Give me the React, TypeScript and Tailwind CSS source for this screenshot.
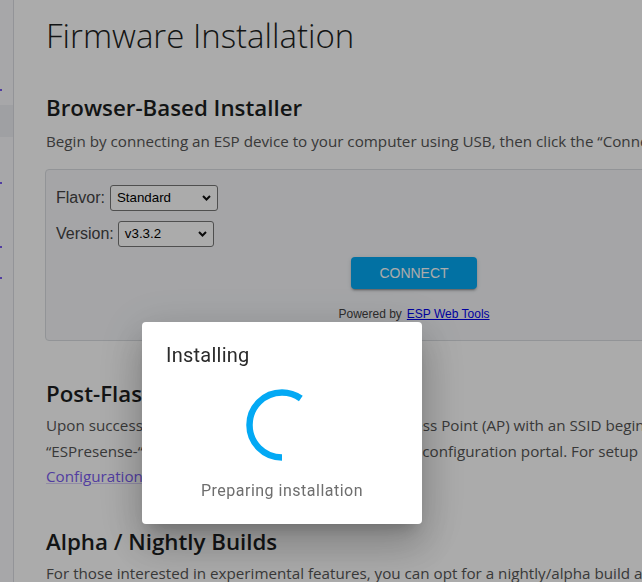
import React from 'react';

const docFont = { fontFamily: '"Open Sans", "Noto Sans", sans-serif' };

const Chevron: React.FC = () => (
  <svg width="9" height="6" viewBox="0 0 9 6" className="shrink-0">
    <path d="M1 1l3.5 3.5L8 1" fill="none" stroke="#111" strokeWidth="2" />
  </svg>
);

interface FakeSelectProps {
  value: string;
  className: string;
}

const FakeSelect: React.FC<FakeSelectProps> = ({ value, className }) => (
  <span
    className={`inline-flex h-[26px] items-center justify-between rounded-[3px] border border-[#767676] bg-white px-[6px] text-[13.33px] text-black ${className}`}
  >
    <span>{value}</span>
    <Chevron />
  </span>
);

const Sidebar: React.FC = () => (
  <aside className="w-[14px] shrink-0 border-r border-[#dcdde3] bg-[#fafafc]">
    <div className="h-[89px]" />
    <div className="h-[2px] w-[2px] bg-[#7a5cf0]" />
    <div className="h-[14px]" />
    <div className="h-[32px] bg-[#eeeff3]" />
    <div className="h-[45px]" />
    <div className="h-[2px] w-[2px] bg-[#7a5cf0]" />
    <div className="h-[62px]" />
    <div className="h-[2px] w-[2px] bg-[#7a5cf0]" />
    <div className="h-[29px]" />
    <div className="h-[2px] w-[2px] bg-[#7a5cf0]" />
  </aside>
);

const Installer: React.FC = () => (
  <div
    className="-ml-[1px] mt-[14.5px] w-[738px] rounded-[4px] border border-[#dadde1] bg-[#f6f7fa] px-[10px] pt-[15px] pb-[18px] text-[#333]"
    style={{ fontFamily: '"Liberation Sans", Arial, sans-serif' }}
  >
    <div className="flex flex-col gap-[10px] text-[16px]">
      <div className="flex items-center gap-[5px]">
        <span className="text-[#444]">Flavor:</span>
        <FakeSelect value="Standard" className="w-[108px]" />
      </div>
      <div className="flex items-center gap-[4px]">
        <span className="text-[#444]">Version:</span>
        <FakeSelect value="v3.3.2" className="w-[96px]" />
      </div>
    </div>
    <div className="mt-[10px] flex justify-center">
      <button className="h-[32px] w-[126px] rounded-[4px] bg-[#03a9f4] text-[14px] text-white shadow-[0_3px_1px_-2px_rgba(0,0,0,0.2),0_2px_2px_0_rgba(0,0,0,0.14),0_1px_5px_0_rgba(0,0,0,0.12)]">
        CONNECT
      </button>
    </div>
    <div className="mt-[17px] flex justify-center gap-[5px] text-[12px] leading-[16px]">
      <span className="text-[#444]">Powered by</span>
      <a className="text-[#0000ee] underline">ESP Web Tools</a>
    </div>
  </div>
);

const InstallDialog: React.FC = () => (
  <div className="fixed inset-0 bg-black/[0.33] pl-[142px] pt-[322px]">
    <div
      className="flex h-[202px] w-[280px] flex-col rounded-[4px] bg-white shadow-[0_11px_15px_-7px_rgba(0,0,0,0.2),0_24px_38px_3px_rgba(0,0,0,0.14),0_9px_46px_8px_rgba(0,0,0,0.12)]"
      style={{ fontFamily: 'Roboto, "Liberation Sans", sans-serif' }}
    >
      <h2 className="mt-[17px] px-[24px] text-[20px] leading-[32px] tracking-[0.25px] text-[#2b2b2b]">Installing</h2>
      <div className="mt-[16px] flex justify-center">
        <svg width="76" height="76" viewBox="0 0 76 76">
          <circle
            cx="38"
            cy="38"
            r="32.5"
            fill="none"
            stroke="#03a9f4"
            strokeWidth="6.5"
            strokeDasharray="122 300"
            transform="rotate(90 38 38)"
          />
        </svg>
      </div>
      <p className="mt-[16px] text-center text-[16px] leading-[24px] tracking-[0.5px] text-[#6e6e6e]">
        Preparing installation
      </p>
    </div>
  </div>
);

export default function App() {
  return (
    <div className="relative flex h-[582px] w-full overflow-hidden bg-white">
      <Sidebar />
      <main className="min-w-0 flex-1 pl-[32px] pt-[16px]" style={docFont}>
        <h1 className="whitespace-nowrap text-[33px] font-light leading-[40px] text-[#1c1e21]">Firmware Installation</h1>

        <h2 className="mt-[37px] text-[22.3px] font-semibold leading-[30px] text-[#1c1e21]">Browser-Based Installer</h2>
        <p className="mt-[6px] whitespace-nowrap text-[15.2px] leading-[25.6px] text-[#555]">
          Begin by connecting an ESP device to your computer using USB, then click the “Connect” button.
        </p>

        <Installer />

        <h2 className="mt-[38px] text-[22.3px] font-semibold leading-[30px] text-[#1c1e21]">Post-Flash Setup</h2>
        <p className="mt-[4px] whitespace-nowrap text-[15.2px] leading-[25.6px] text-[#555]">
          Upon successful flashing, the device will start an Access Point (AP) with an SSID beginning with
          <br />
          “ESPresense-“. Connect to this network and open the configuration portal. For setup instructions, see the
          <br />
          <a className="text-[#7a5cf0] underline decoration-[#d8d0f8]">Configuration</a> page.
        </p>

        <h2 className="mt-[37px] text-[22.3px] font-semibold leading-[30px] text-[#1c1e21]">Alpha / Nightly Builds</h2>
        <p className="mt-[4px] whitespace-nowrap text-[15.2px] leading-[25.6px] text-[#555]">
          For those interested in experimental features, you can opt for a nightly/alpha build available here.
        </p>
      </main>
      <InstallDialog />
    </div>
  );
}
